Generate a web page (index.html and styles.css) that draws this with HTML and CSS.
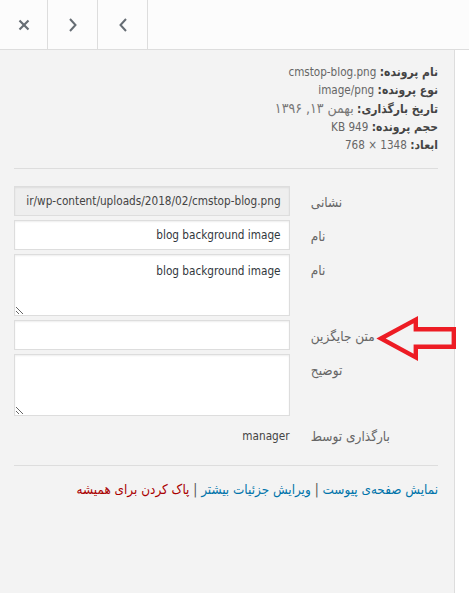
FILE: index.html
```html
<!DOCTYPE html>
<html dir="rtl" lang="fa">
<head>
<meta charset="utf-8">
<title>جزئیات پیوست</title>
<link rel="stylesheet" href="styles.css">
</head>
<body>
<div class="frame">
  <header class="topbar">
    <div class="nav">
      <button class="nav-btn nav-prev" type="button" aria-label="قبلی">
        <svg width="8" height="14" viewBox="0 0 8 14"><polyline points="7,1 1.5,7 7,13" /></svg>
      </button>
      <button class="nav-btn nav-next" type="button" aria-label="بعدی">
        <svg width="8" height="14" viewBox="0 0 8 14"><polyline points="1,1 6.5,7 1,13" /></svg>
      </button>
      <button class="nav-btn nav-close" type="button" aria-label="بستن">
        <svg width="12" height="12" viewBox="0 0 12 12"><line x1="1.5" y1="1.5" x2="10.5" y2="10.5" /><line x1="10.5" y1="1.5" x2="1.5" y2="10.5" /></svg>
      </button>
    </div>
  </header>
  <div class="main">
    <div class="gutter"></div>
    <section class="details">
      <div class="file-info">
        <div class="info-line"><strong>نام پرونده:</strong> <span class="val">cmstop-blog.png</span></div>
        <div class="info-line"><strong>نوع پرونده:</strong> <span class="val">image/png</span></div>
        <div class="info-line"><strong>تاریخ بارگذاری:</strong> <span class="val date">بهمن ۱۳, ۱۳۹۶</span></div>
        <div class="info-line"><strong>حجم پرونده:</strong> <span class="val">949 KB</span></div>
        <div class="info-line"><strong>ابعاد:</strong> <span class="val">1348 × 768</span></div>
      </div>
      <div class="sep sep-top"></div>
      <div class="settings">
        <label class="setting">
          <span class="name">نشانی</span>
          <input class="field readonly" type="text" readonly value="ir/wp-content/uploads/2018/02/cmstop-blog.png">
        </label>
        <label class="setting">
          <span class="name">نام</span>
          <input class="field" type="text" value="blog background image">
        </label>
        <label class="setting">
          <span class="name">نام</span>
          <textarea class="field area">blog background image</textarea>
        </label>
        <label class="setting">
          <span class="name">متن جایگزین</span>
          <input class="field" type="text" value="">
        </label>
        <label class="setting">
          <span class="name">توضیح</span>
          <textarea class="field area"></textarea>
        </label>
        <div class="setting">
          <span class="name">بارگذاری توسط</span>
          <span class="value">manager</span>
        </div>
      </div>
      <div class="sep sep-bottom"></div>
      <div class="actions">
        <a href="#" class="link">نمایش صفحه‌ی پیوست</a>
        <span class="bar">|</span>
        <a href="#" class="link">ویرایش جزئیات بیشتر</a>
        <span class="bar">|</span>
        <a href="#" class="link delete">پاک کردن برای همیشه</a>
      </div>
    </section>
  </div>
  <svg class="arrow" width="90" height="56" viewBox="0 0 90 56">
    <polygon points="11,28.5 45.8,9.6 45.8,19.2 83.8,19.2 83.8,36.8 45.8,36.8 45.8,47.4" />
  </svg>
</div>
</body>
</html>
```

FILE: styles.css
```css
html, body {
  margin: 0;
  padding: 0;
  background: #fff;
}

body {
  font-family: "DejaVu Sans Condensed", "DejaVu Sans", sans-serif;
  font-stretch: condensed;
  font-size: 12px;
  color: #444;
}

.frame {
  position: relative;
  width: 469px;
  height: 593px;
  overflow: hidden;
  display: flex;
  flex-direction: column;
}

.topbar {
  height: 49px;
  flex: 0 0 49px;
  background: #fcfcfc;
  border-bottom: 1px solid #ddd;
  display: flex;
}

.nav {
  display: flex;
  margin-right: auto;
  height: 100%;
}

.nav-btn {
  width: 50px;
  height: 100%;
  padding: 0;
  margin: 0;
  border: 0;
  border-right: 1px solid #ddd;
  background: transparent;
  display: flex;
  align-items: center;
  justify-content: center;
}

.nav-close {
  width: 48px;
}

.nav-btn svg {
  fill: none;
  stroke: #666d74;
  stroke-width: 2;
}

.nav-close svg {
  stroke-width: 2.2;
}

.main {
  flex: 1;
  display: flex;
}

.gutter {
  width: 14px;
  flex: 0 0 14px;
  background: #fff;
}

.details {
  flex: 1;
  background: #f3f3f3;
  border-right: 1px solid #ddd;
  padding: 13px 16px 0 14px;
}

.file-info {
  line-height: 18px;
  color: #666;
}

.info-line strong {
  font-weight: bold;
  color: #444;
}

.info-line .val {
  font-size: 11.6px;
}

.info-line .date {
  font-size: 14px;
  color: #777;
}

.sep {
  border-top: 1px solid #ddd;
}

.sep-top {
  margin-top: 14px;
}

.settings {
  margin-top: 17px;
}

.setting {
  display: flex;
  justify-content: space-between;
  align-items: flex-start;
  margin-bottom: 4px;
}

.setting .name {
  width: 30%;
  text-align: left;
  padding-top: 8px;
  line-height: 17px;
  color: #666;
  font-size: 13.5px;
}

.field {
  width: 65%;
  box-sizing: border-box;
  margin: 0;
  border: 1px solid #ddd;
  box-shadow: inset 0 1px 2px rgba(0, 0, 0, 0.07);
  background: #fff;
  color: #32373c;
  font-family: "DejaVu Sans Condensed", "DejaVu Sans", sans-serif;
  font-stretch: condensed;
  font-size: 11.7px;
  outline: none;
}

input.field {
  height: 30px;
  padding: 0 8px;
}

.field.readonly {
  background: #eee;
  color: #444;
}

.field.area {
  height: 62px;
  padding: 6px 8px;
  line-height: 20px;
  resize: vertical;
  display: block;
}

.setting .value {
  width: 65%;
  padding-top: 8px;
  line-height: 17px;
  font-size: 11.7px;
  color: #444;
  text-align: right;
}

.sep-bottom {
  margin-top: 20px;
}

.actions {
  margin-top: 15px;
  line-height: 18px;
  font-size: 13.4px;
}

.link {
  color: #0073aa;
  text-decoration: none;
}

.link.delete {
  color: #a00;
}

.bar {
  color: #555;
}

.arrow {
  position: absolute;
  left: 370px;
  top: 310px;
}

.arrow polygon {
  fill: none;
  stroke: #ed1c24;
  stroke-width: 4.4;
  stroke-linejoin: miter;
  stroke-miterlimit: 10;
}
```
